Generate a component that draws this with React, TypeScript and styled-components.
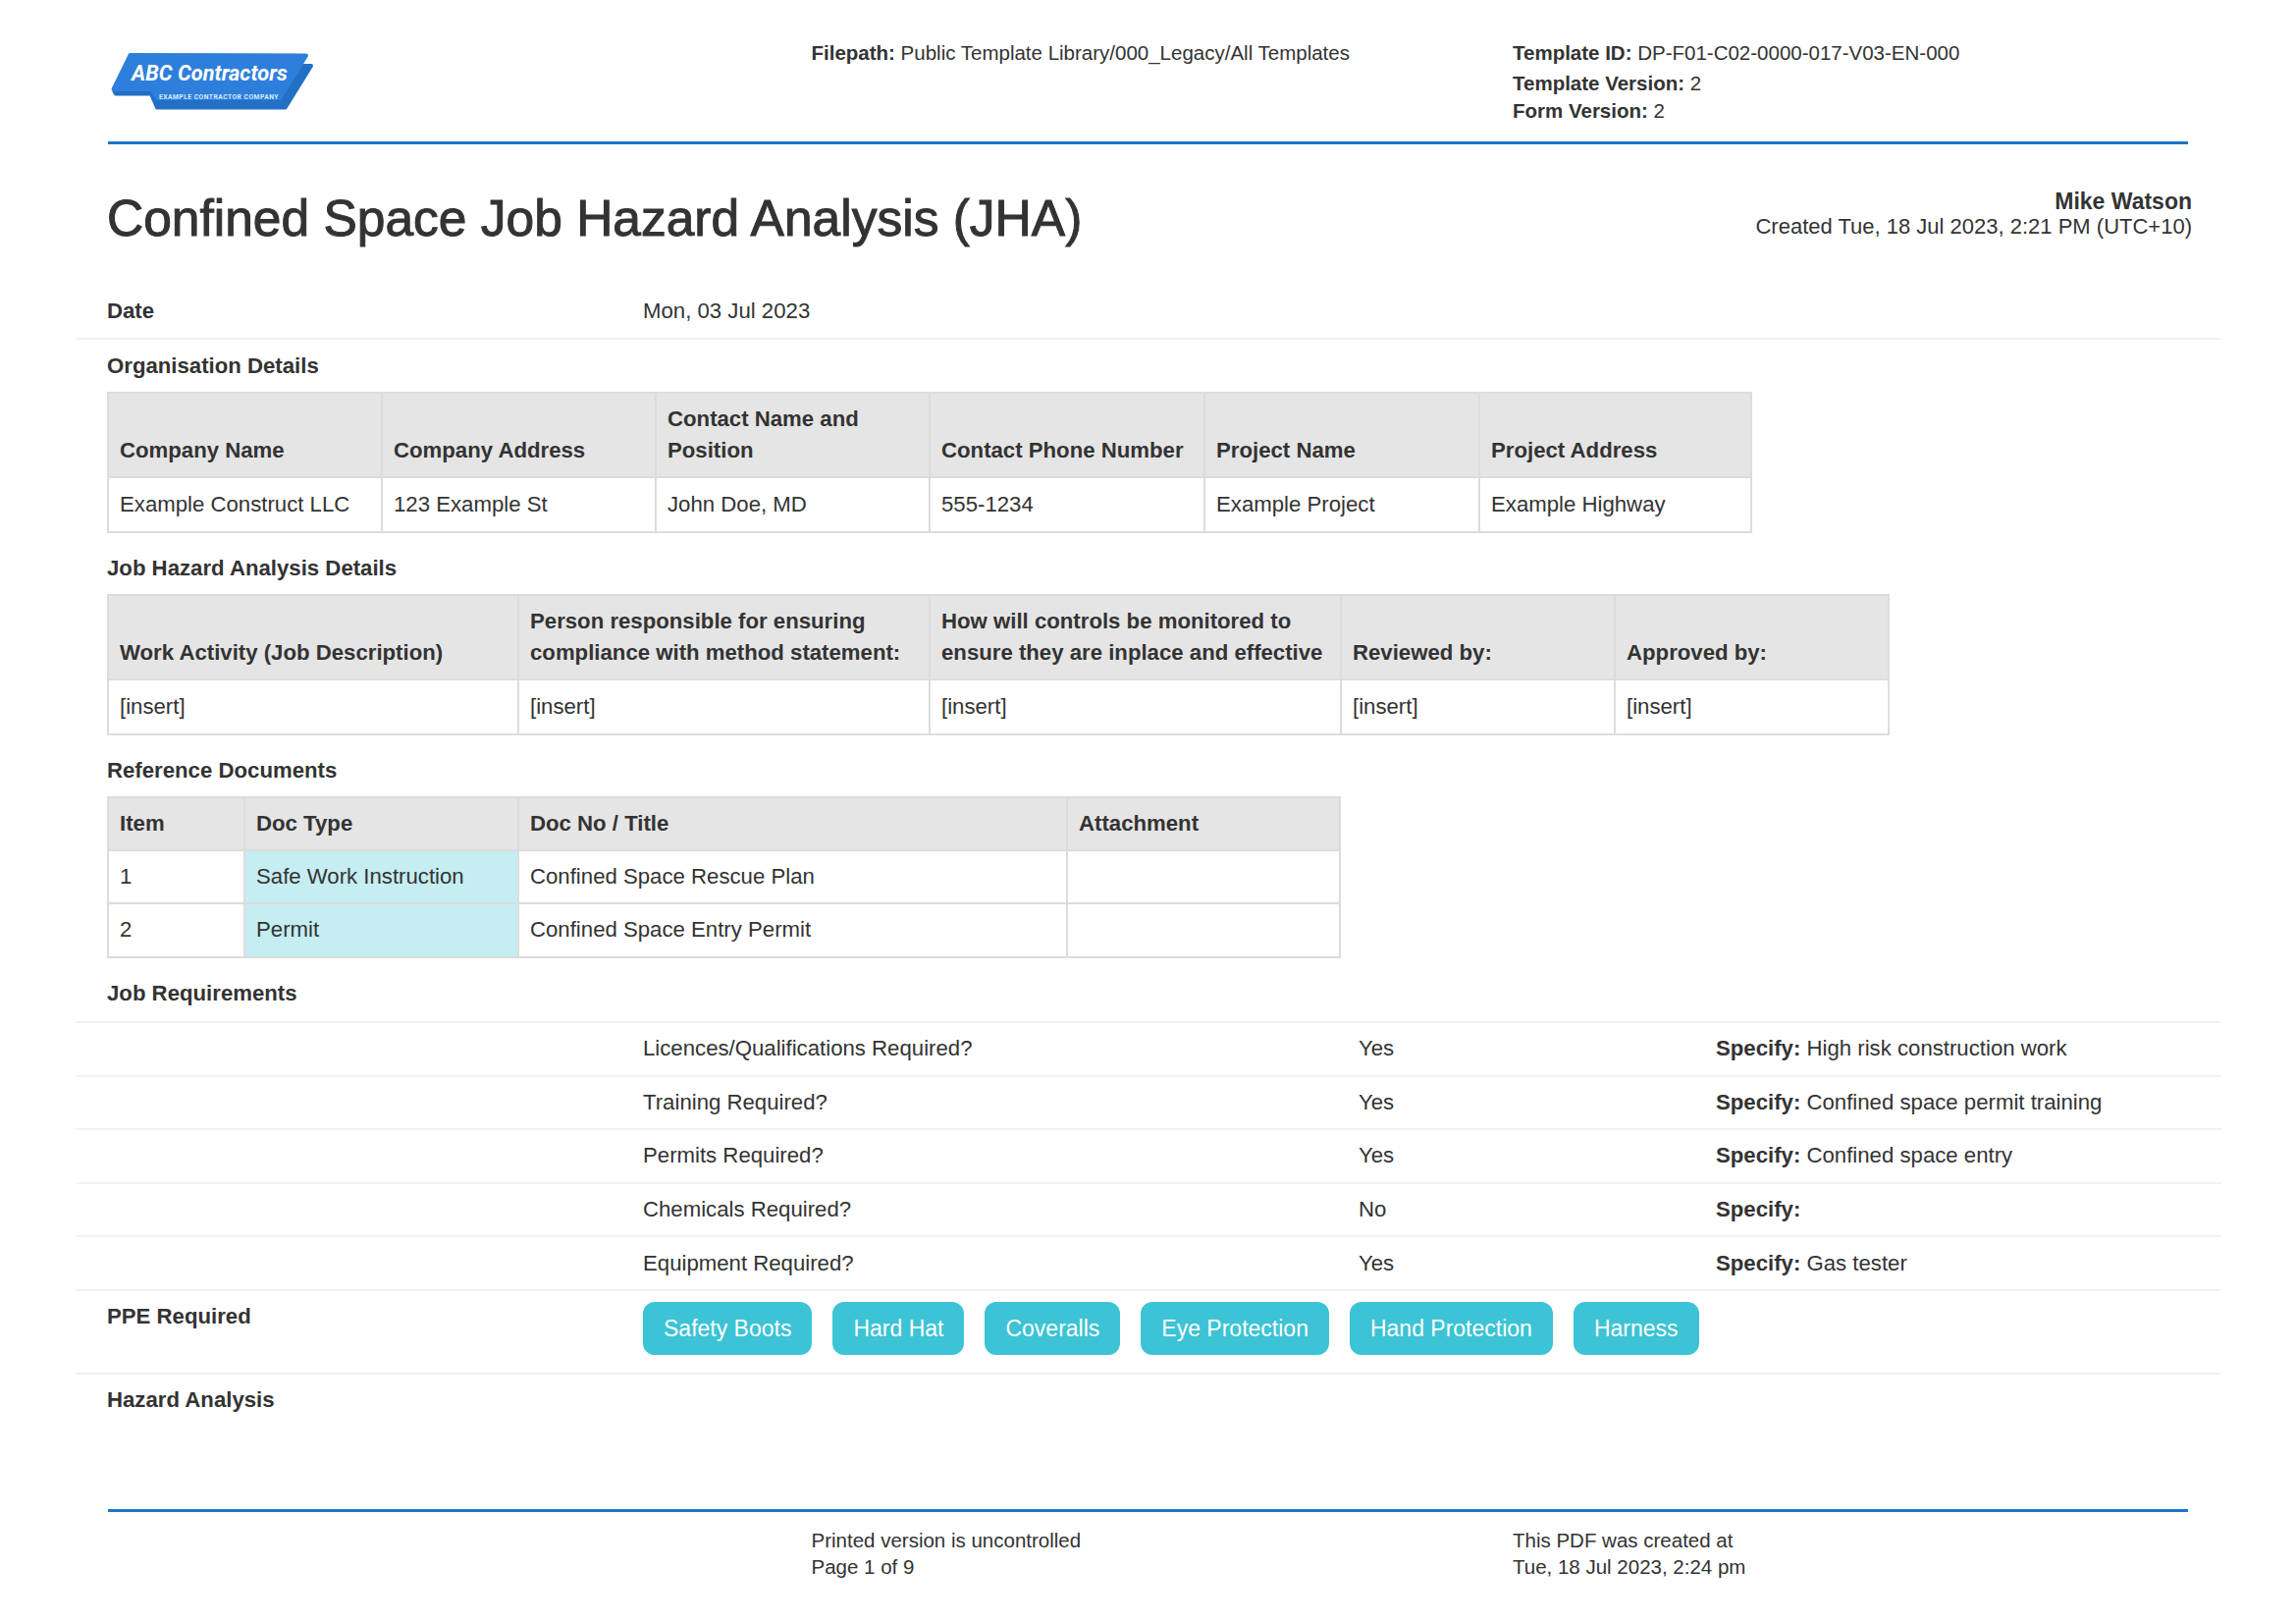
import React from "react"
import styled, { createGlobalStyle } from "styled-components"

const GlobalStyle = createGlobalStyle`
  html, body {
    margin: 0;
    padding: 0;
    background: #fff;
  }
  body {
    color: #333;
    font-family: "Liberation Sans", Arial, sans-serif;
    font-size: 22.2px;
    line-height: 28px;
  }
  * {
    box-sizing: border-box;
  }
`

const orgColumns = [279, 279, 279, 280, 280, 277]
const orgHead = ["Company Name", "Company Address", "Contact Name and Position", "Contact Phone Number", "Project Name", "Project Address"]
const orgRow = ["Example Construct LLC", "123 Example St", "John Doe, MD", "555-1234", "Example Project", "Example Highway"]

const jhaColumns = [418, 419, 419, 279, 279]
const jhaHead = [
  "Work Activity (Job Description)",
  "Person responsible for ensuring compliance with method statement:",
  "How will controls be monitored to ensure they are inplace and effective",
  "Reviewed by:",
  "Approved by:",
]

const refColumns = [139, 279, 559, 278]
const refHead = ["Item", "Doc Type", "Doc No / Title", "Attachment"]
const refRows = [
  ["1", "Safe Work Instruction", "Confined Space Rescue Plan", ""],
  ["2", "Permit", "Confined Space Entry Permit", ""],
]

const requirements = [
  { question: "Licences/Qualifications Required?", answer: "Yes", specify: "High risk construction work" },
  { question: "Training Required?", answer: "Yes", specify: "Confined space permit training" },
  { question: "Permits Required?", answer: "Yes", specify: "Confined space entry" },
  { question: "Chemicals Required?", answer: "No", specify: "" },
  { question: "Equipment Required?", answer: "Yes", specify: "Gas tester" },
]

const ppe = ["Safety Boots", "Hard Hat", "Coveralls", "Eye Protection", "Hand Protection", "Harness"]

const Logo = () => (
  <LogoSvg viewBox="0 0 220 70" width="220" height="70">
    <polygon points="25.7,16.3 207,17 180.7,59.5 50,59.5 44,45.5 7.7,45.5 6.5,43" fill="#2170c6" stroke="#2170c6" strokeWidth="4" strokeLinejoin="round" />
    <polygon points="22.7,6 202,6.5 175.5,50 50,50 44,41 5.5,41" fill="#2e7fdc" stroke="#2e7fdc" strokeWidth="4" strokeLinejoin="round" />
    <LogoTitle x="24" y="31.5">ABC Contractors</LogoTitle>
    <LogoTagline x="52" y="51">EXAMPLE CONTRACTOR COMPANY</LogoTagline>
  </LogoSvg>
)

const DataTable = ({ columns, head, rows, tinted, rowHeight }: { columns: number[]; head: string[]; rows: string[][]; tinted?: number; rowHeight: number }) => (
  <Table style={{ width: columns.reduce((sum, w) => sum + w, 0) }}>
    <colgroup>
      {columns.map((w, i) => (
        <col key={i} style={{ width: w }} />
      ))}
    </colgroup>
    <thead>
      <tr>
        {head.map((label) => (
          <HeadCell key={label}>{label}</HeadCell>
        ))}
      </tr>
    </thead>
    <tbody>
      {rows.map((row, r) => (
        <tr key={r}>
          {row.map((value, c) => (
            <BodyCell key={c} $tinted={c === tinted} $height={rowHeight}>{value}</BodyCell>
          ))}
        </tr>
      ))}
    </tbody>
  </Table>
)

const App = () => {
  return (
    <Page>
      <GlobalStyle />
      <TopBar>
        <LogoSlot><Logo /></LogoSlot>
        <div>
          <MetaLine><b>Filepath:</b> Public Template Library/000_Legacy/All Templates</MetaLine>
        </div>
        <div>
          <MetaLine $first><b>Template ID:</b> DP-F01-C02-0000-017-V03-EN-000</MetaLine>
          <MetaLine><b>Template Version:</b> 2</MetaLine>
          <MetaLine><b>Form Version:</b> 2</MetaLine>
        </div>
      </TopBar>

      <TitleRow>
        <Title>Confined Space Job Hazard Analysis (JHA)</Title>
        <Author>
          <AuthorName>Mike Watson</AuthorName>
          <div>Created Tue, 18 Jul 2023, 2:21 PM (UTC+10)</div>
        </Author>
      </TitleRow>

      <FieldRow>
        <b>Date</b>
        <span>Mon, 03 Jul 2023</span>
      </FieldRow>

      <Section>
        <SectionTitle>Organisation Details</SectionTitle>
        <DataTable columns={orgColumns} head={orgHead} rows={[orgRow]} rowHeight={56} />
      </Section>

      <Section>
        <SectionTitle>Job Hazard Analysis Details</SectionTitle>
        <DataTable columns={jhaColumns} head={jhaHead} rows={[["[insert]", "[insert]", "[insert]", "[insert]", "[insert]"]]} rowHeight={56} />
      </Section>

      <Section>
        <SectionTitle>Reference Documents</SectionTitle>
        <DataTable columns={refColumns} head={refHead} rows={refRows} tinted={1} rowHeight={54.5} />
      </Section>

      <RequirementsTitle>Job Requirements</RequirementsTitle>
      <Requirements>
        {requirements.map((item) => (
          <RequirementRow key={item.question}>
            <span>{item.question}</span>
            <span>{item.answer}</span>
            <span><b>Specify:</b> {item.specify}</span>
          </RequirementRow>
        ))}
      </Requirements>

      <PpeRow>
        <b>PPE Required</b>
        <Chips>
          {ppe.map((name) => (
            <Chip key={name}>{name}</Chip>
          ))}
        </Chips>
      </PpeRow>

      <HazardRow>Hazard Analysis</HazardRow>

      <BottomBar>
        <span />
        <div>
          <FootLine>Printed version is uncontrolled</FootLine>
          <FootLine>Page 1 of 9</FootLine>
        </div>
        <div>
          <FootLine>This PDF was created at</FootLine>
          <FootLine>Tue, 18 Jul 2023, 2:24 pm</FootLine>
        </div>
      </BottomBar>
    </Page>
  )
}

const Page = styled.div`
  width: 2339px;
  height: 1653px;
  overflow: hidden;
  background: #fff;
`

const TopBar = styled.header`
  display: grid;
  grid-template-columns: 716.5px 714.5px 1fr;
  height: 147px;
  margin: 0 110px;
  padding-top: 40px;
  border-bottom: 3px solid #1b75c8;
`

const LogoSlot = styled.div`
  margin-top: 10px;
`

const LogoSvg = styled.svg`
  display: block;
`

const LogoTitle = styled.text`
  fill: #fff;
  font-family: Roboto, sans-serif;
  font-size: 21.8px;
  font-style: italic;
  font-weight: 700;
`

const LogoTagline = styled.text`
  fill: #dcebfb;
  font-family: Roboto, sans-serif;
  font-size: 6.7px;
  font-weight: 700;
  letter-spacing: 0.5px;
`

const MetaLine = styled.div<{ $first?: boolean }>`
  font-size: 20.5px;
  line-height: 28px;
  margin-bottom: ${({ $first }) => ($first ? "3px" : "0")};
`

const TitleRow = styled.div`
  display: flex;
  justify-content: space-between;
  margin: 45px 106px 33px 109px;
`

const Title = styled.h1`
  margin: 0;
  font-size: 51.5px;
  font-weight: 400;
  line-height: 60px;
  -webkit-text-stroke: 1px #333;
`

const Author = styled.div`
  margin-top: 1px;
  font-size: 22px;
  line-height: 25px;
  text-align: right;
`

const AuthorName = styled.div`
  font-size: 23px;
  font-weight: 700;
`

const FieldRow = styled.div`
  display: grid;
  grid-template-columns: 546px 1fr;
  margin: 0 76px 13px 78px;
  padding: 18px 0 13px 31px;
  border-bottom: 2px solid #eff1f3;
`

const Section = styled.section`
  margin: 0 0 22.5px 109px;
`

const SectionTitle = styled.div`
  margin-bottom: 12px;
  font-weight: 700;
`

const Table = styled.table`
  border-collapse: collapse;
  table-layout: fixed;
`

const HeadCell = styled.th`
  padding: 10px 11px 9.5px;
  border: 2px solid #dcdcdc;
  background: #e5e5e5;
  font-weight: 700;
  line-height: 32px;
  text-align: left;
  vertical-align: bottom;
`

const BodyCell = styled.td<{ $tinted?: boolean; $height: number }>`
  height: ${({ $height }) => $height}px;
  padding: 0 11px;
  border: 2px solid #dcdcdc;
  background: ${({ $tinted }) => ($tinted ? "#c5edf2" : "#fff")};
`

const RequirementsTitle = styled.div`
  margin: 0 0 14px 109px;
  font-weight: 700;
`

const Requirements = styled.div`
  margin: 0 76px 0 78px;
`

const RequirementRow = styled.div`
  display: grid;
  grid-template-columns: 729px 364px 1fr;
  align-items: center;
  height: 54.6px;
  padding-left: 577px;
  border-top: 2px solid #eff1f3;
`

const PpeRow = styled.div`
  display: grid;
  grid-template-columns: 546px 1fr;
  height: 87px;
  margin: 0 76px 0 78px;
  padding: 11px 0 0 31px;
  border-top: 2px solid #eff1f3;
  border-bottom: 2px solid #eff1f3;

  b {
    line-height: 28px;
    margin-top: 1px;
  }
`

const Chips = styled.div`
  display: flex;
  gap: 21px;
`

const Chip = styled.div`
  display: flex;
  align-items: center;
  height: 54px;
  padding: 0 21px;
  border-radius: 12px;
  background: #3cc3d5;
  color: #fff;
  font-size: 23px;
`

const HazardRow = styled.div`
  margin: 12px 0 97px 109px;
  font-weight: 700;
`

const BottomBar = styled.footer`
  display: grid;
  grid-template-columns: 716.5px 714.5px 1fr;
  margin: 0 110px;
  padding-top: 15px;
  border-top: 3px solid #1b75c8;
`

const FootLine = styled.div`
  font-size: 20.5px;
  line-height: 27px;
`

export default App
